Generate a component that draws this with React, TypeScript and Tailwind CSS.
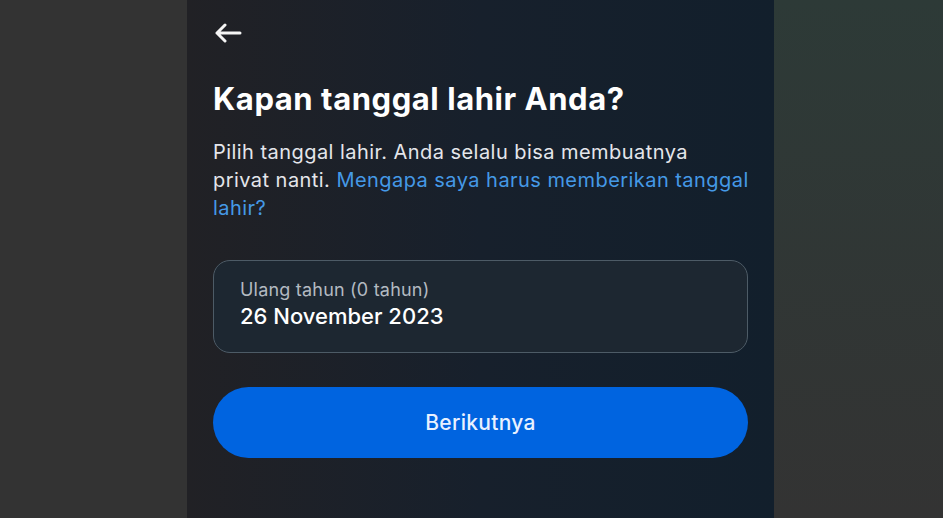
import React from 'react';

const BackArrow = () => (
  <svg width="28" height="20" viewBox="0 0 28 20" fill="none" className="block">
    <path d="M26 10H3M11 2L3 10l8 8" stroke="#f5f5f5" strokeWidth="3" strokeLinecap="round" strokeLinejoin="round" />
  </svg>
);

export default function App() {
  return (
    <div className="flex h-[518px] w-full overflow-hidden font-['Inter',sans-serif]">
      <div className="w-[187px] shrink-0 bg-[#333333]" />

      <div className="flex w-[587px] shrink-0 flex-col bg-gradient-to-r from-[#212125] via-[#17202c] to-[#121f2c] px-[26px]">
        <div className="ml-[1px] mt-[23px]">
          <BackArrow />
        </div>

        <h1 className="mt-[38px] text-[31px] font-bold leading-[36px] tracking-[0.55px] text-white">
          Kapan tanggal lahir Anda?
        </h1>

        <p className="mt-[21px] whitespace-nowrap text-[20px] leading-[28px] tracking-[0.45px] text-[#e4e6eb]">
          Pilih tanggal lahir. Anda selalu bisa membuatnya
          <br />
          privat nanti. <span className="text-[#4599e6]">Mengapa saya harus memberikan tanggal</span>
          <br />
          <span className="text-[#4599e6]">lahir?</span>
        </p>

        <div className="mt-[38px] flex h-[93px] flex-col justify-center rounded-[17px] border border-[#4d5b66] bg-[#1d2731] px-[26px] pb-[5px]">
          <span className="text-[18px] leading-[22px] tracking-[0.2px] text-[#b3bac1]">Ulang tahun (0 tahun)</span>
          <span className="mt-[2px] text-[22px] font-medium leading-[26px] text-white">26 November 2023</span>
        </div>

        <button className="mt-[34px] h-[71px] w-full rounded-full bg-[#0064e0] text-[21px] font-medium tracking-[0.3px] text-[#e8f1ff]">
          Berikutnya
        </button>
      </div>

      <div className="flex-1 bg-gradient-to-b from-[#2d3a37] to-[#333333]" />
    </div>
  );
}
